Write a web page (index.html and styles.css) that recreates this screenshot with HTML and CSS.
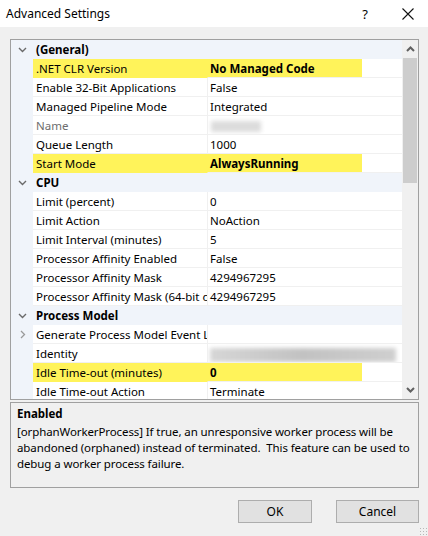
FILE: index.html
```html
<!DOCTYPE html>
<html>
<head>
<meta charset="utf-8">
<link rel="stylesheet" href="styles.css">
</head>
<body>
<div class="window">
  <div class="titlebar">
    <span class="title">Advanced Settings</span>
    <span class="help">?</span>
    <svg class="close" width="12" height="12" viewBox="0 0 12 12"><path d="M0.5 0.5 L11.5 11.5 M11.5 0.5 L0.5 11.5" stroke="#111" stroke-width="1.1" fill="none"/></svg>
  </div>
  <div class="body">
    <div class="grid">
      <div class="rows">
        <div class="row cat"><span class="gut"><svg width="9" height="6" viewBox="0 0 9 6"><path d="M1 1 L4.5 4.5 L8 1" stroke="#6a6a6a" stroke-width="1.4" fill="none"/></svg></span><span class="name">(General)</span><span class="val"></span></div>
        <div class="row hl"><span class="gut"></span><span class="name">.NET CLR Version</span><span class="val b">No Managed Code</span></div>
        <div class="row"><span class="gut"></span><span class="name">Enable 32-Bit Applications</span><span class="val">False</span></div>
        <div class="row"><span class="gut"></span><span class="name">Managed Pipeline Mode</span><span class="val">Integrated</span></div>
        <div class="row"><span class="gut"></span><span class="name dim">Name</span><span class="val"><span class="blur blur-name"></span></span></div>
        <div class="row"><span class="gut"></span><span class="name">Queue Length</span><span class="val">1000</span></div>
        <div class="row hl"><span class="gut"></span><span class="name">Start Mode</span><span class="val b">AlwaysRunning</span></div>
        <div class="row cat"><span class="gut"><svg width="9" height="6" viewBox="0 0 9 6"><path d="M1 1 L4.5 4.5 L8 1" stroke="#6a6a6a" stroke-width="1.4" fill="none"/></svg></span><span class="name">CPU</span><span class="val"></span></div>
        <div class="row"><span class="gut"></span><span class="name">Limit (percent)</span><span class="val">0</span></div>
        <div class="row"><span class="gut"></span><span class="name">Limit Action</span><span class="val">NoAction</span></div>
        <div class="row"><span class="gut"></span><span class="name">Limit Interval (minutes)</span><span class="val">5</span></div>
        <div class="row"><span class="gut"></span><span class="name">Processor Affinity Enabled</span><span class="val">False</span></div>
        <div class="row"><span class="gut"></span><span class="name">Processor Affinity Mask</span><span class="val">4294967295</span></div>
        <div class="row"><span class="gut"></span><span class="name">Processor Affinity Mask (64-bit option)</span><span class="val">4294967295</span></div>
        <div class="row cat"><span class="gut"><svg width="9" height="6" viewBox="0 0 9 6"><path d="M1 1 L4.5 4.5 L8 1" stroke="#6a6a6a" stroke-width="1.4" fill="none"/></svg></span><span class="name">Process Model</span><span class="val"></span></div>
        <div class="row"><span class="gut"><svg width="6" height="9" viewBox="0 0 6 9"><path d="M1 1 L4.5 4.5 L1 8" stroke="#9a9a9a" stroke-width="1.3" fill="none"/></svg></span><span class="name">Generate Process Model Event Log Entry</span><span class="val"></span></div>
        <div class="row"><span class="gut"></span><span class="name">Identity</span><span class="val"><span class="blur blur-id"></span></span></div>
        <div class="row hl"><span class="gut"></span><span class="name">Idle Time-out (minutes)</span><span class="val b">0</span></div>
        <div class="row"><span class="gut"></span><span class="name">Idle Time-out Action</span><span class="val">Terminate</span></div>
      </div>
      <div class="scrollbar">
        <svg class="arrow" width="9" height="6" viewBox="0 0 9 6"><path d="M1 5 L4.5 1.5 L8 5" stroke="#606060" stroke-width="2" fill="none"/></svg>
        <div class="track"><div class="thumb"></div></div>
        <svg class="arrow" width="9" height="6" viewBox="0 0 9 6"><path d="M1 1 L4.5 4.5 L8 1" stroke="#606060" stroke-width="2" fill="none"/></svg>
      </div>
    </div>
    <div class="desc">
      <div class="desc-title">Enabled</div>
      <div class="desc-text">[orphanWorkerProcess] If true, an unresponsive worker process will be<br>abandoned (orphaned) instead of terminated.&nbsp; This feature can be used to<br>debug a worker process failure.</div>
    </div>
    <div class="buttons">
      <button class="btn ok">OK</button>
      <button class="btn cancel">Cancel</button>
    </div>
  </div>
  <div class="grip"></div>
</div>
</body>
</html>
```
FILE: styles.css
```css
* { box-sizing: border-box; }
html, body { margin: 0; padding: 0; }
body {
  width: 428px;
  height: 536px;
  background: #f0f0f0;
  font-family: "Noto Sans", "Open Sans", sans-serif;
  font-size: 11.5px;
  color: #000;
  overflow: hidden;
}
.window { position: relative; width: 428px; height: 536px; }
.titlebar {
  height: 27px;
  background: #fff;
  display: flex;
  align-items: center;
  padding-left: 6px;
}
.title { font-size: 12px; flex: 1; }
.help { font-size: 13px; margin-right: 34px; }
.close { margin-right: 14px; }
.body { padding: 12px 9px 0 10px; }
.grid {
  height: 361px;
  border: 1px solid #a0a0a0;
  background: #fff;
  display: flex;
}
.rows { width: 392px; overflow: hidden; }
.row {
  display: grid;
  grid-template-columns: 22px 174px 196px;
  height: 19px;
  line-height: 19px;
}
.row .gut {
  background: #f0f4fa;
  display: flex;
  align-items: center;
  justify-content: center;
  padding-left: 1px;
}
.row .name, .row .val {
  border-bottom: 1px solid #f0f0f0;
  white-space: nowrap;
  overflow: hidden;
  padding-left: 3px;
}
.row .val { border-left: 1px solid #f0f0f0; padding-left: 2px; }
.row.cat .name, .row.cat .val { background: #f0f4fa; border-color: #f0f4fa; font-weight: bold; }
.row.cat .name { padding-left: 3px; }
.row.hl .name { background: #fff35a; border-bottom-color: #fff35a; }
.row.hl .val {
  background: linear-gradient(to right, #fff35a 154px, #fff 154px);
  border-left-color: #fff35a;
}
.b { font-weight: bold; }
.dim { color: #6d6d6d; }
.blur { display: inline-block; vertical-align: middle; filter: blur(2px); }
.blur-name { width: 50px; height: 11px; background: #dcdcdc; margin-left: 1px; }
.blur-id { width: 186px; height: 14px; background: linear-gradient(to right, #d6d6d6, #c2c2c2 50%, #cfcfcf); }
.scrollbar {
  width: 16px;
  background: #f0f0f0;
  display: flex;
  flex-direction: column;
  align-items: center;
}
.arrow { margin: 6px 0; flex: none; }
.track { flex: 1; width: 100%; padding: 0 1px; }
.thumb { height: 125px; background: #cdcdcd; }
.desc {
  margin-top: 2px;
  height: 86px;
  border: 1px solid #a0a0a0;
  padding: 3px 2px 0 6px;
}
.desc-title { font-weight: bold; line-height: 16px; }
.desc-text { line-height: 16px; margin-top: 2px; white-space: nowrap; letter-spacing: -0.1px; }
.buttons {
  display: flex;
  justify-content: flex-end;
  gap: 24px;
  margin-top: 12px;
}
.btn {
  height: 23px;
  background: #e1e1e1;
  border: 1px solid #adadad;
  font-family: "Noto Sans", "Open Sans", sans-serif;
  font-size: 12px;
  color: #000;
  padding: 0;
}
.ok { width: 74px; }
.cancel { width: 83px; }
.grip {
  position: absolute;
  right: 1px;
  bottom: 1px;
  width: 8px;
  height: 8px;
  background-image: radial-gradient(circle, #b8b8b8 1px, transparent 1px);
  background-size: 3px 3px;
}
```
